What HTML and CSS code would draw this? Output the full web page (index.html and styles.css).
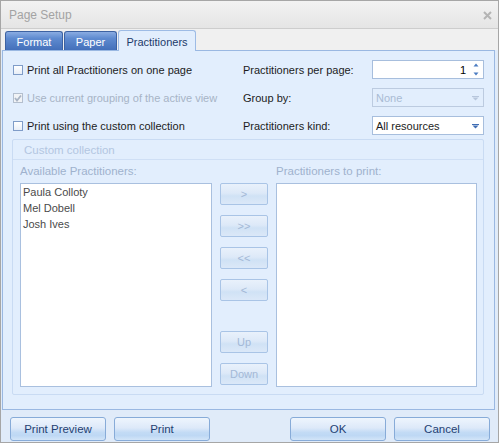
FILE: index.html
```html
<!DOCTYPE html>
<html>
<head>
<meta charset="utf-8">
<title>Page Setup</title>
<link rel="stylesheet" href="styles.css">
</head>
<body>
<div class="window">
  <div class="titlebar">
    <span class="title">Page Setup</span>
    <svg class="close" width="9" height="9" viewBox="0 0 9 9"><path d="M1 1L8 8M8 1L1 8" stroke="#b4b4b4" stroke-width="2"/></svg>
  </div>
  <div class="tabstrip">
    <div class="tab t-format">Format</div>
    <div class="tab t-paper">Paper</div>
    <div class="tab active t-pract">Practitioners</div>
  </div>
  <div class="body">
    <div class="panel">
      <div class="options">
        <div class="checks">
          <label class="check"><span class="box"></span><span>Print all Practitioners on one page</span></label>
          <label class="check disabled"><span class="box checked"><svg width="8" height="8" viewBox="0 0 8 8"><path d="M1 4L3 6.5L7 1.5" fill="none" stroke="#a9b4c4" stroke-width="1.8"/></svg></span><span>Use current grouping of the active view</span></label>
          <label class="check"><span class="box"></span><span>Print using the custom collection</span></label>
        </div>
        <div class="fields">
          <span class="flabel">Practitioners per page:</span>
          <div class="input spin"><span class="val">1</span>
            <svg class="spinarrows" width="6" height="13" viewBox="0 0 6 13"><path d="M0.5 3.5L3 0.5L5.5 3.5Z" fill="#4b7cc2"/><path d="M0.5 9.5L3 12.5L5.5 9.5Z" fill="#4b7cc2"/></svg>
          </div>
          <span class="flabel">Group by:</span>
          <div class="input combo disabled"><span class="val">None</span>
            <svg class="arrow" width="7" height="5" viewBox="0 0 7 5"><rect x="0" y="0" width="7" height="1" fill="#b7c6dc"/><path d="M0.5 1.5L6.5 1.5L3.5 4.5Z" fill="#b7c6dc"/></svg>
          </div>
          <span class="flabel">Practitioners kind:</span>
          <div class="input combo"><span class="val">All resources</span>
            <svg class="arrow" width="7" height="5" viewBox="0 0 7 5"><rect x="0" y="0" width="7" height="1" fill="#3f6db4"/><path d="M0.5 1.5L6.5 1.5L3.5 4.5Z" fill="#3f6db4"/></svg>
          </div>
        </div>
      </div>
      <div class="group">
        <div class="group-head">Custom collection</div>
        <div class="group-body">
          <div class="col col-left">
            <div class="cap">Available Practitioners:</div>
            <div class="list">
              <div class="item">Paula Colloty</div>
              <div class="item">Mel Dobell</div>
              <div class="item">Josh Ives</div>
            </div>
          </div>
          <div class="movebtns">
            <div class="mbtn">&gt;</div>
            <div class="mbtn">&gt;&gt;</div>
            <div class="mbtn">&lt;&lt;</div>
            <div class="mbtn">&lt;</div>
            <div class="mbtn up">Up</div>
            <div class="mbtn">Down</div>
          </div>
          <div class="col col-right">
            <div class="cap">Practitioners to print:</div>
            <div class="list"></div>
          </div>
        </div>
      </div>
    </div>
    <div class="footer">
      <div class="btn">Print Preview</div>
      <div class="btn">Print</div>
      <div class="spacer"></div>
      <div class="btn">OK</div>
      <div class="btn">Cancel</div>
    </div>
  </div>
</div>
</body>
</html>
```
FILE: styles.css
```css
* { box-sizing: border-box; }
body {
  margin: 0;
  background: #ffffff;
  font-family: "Liberation Sans", Arial, sans-serif;
  font-size: 11px;
  color: #1e1e1e;
}
.window {
  width: 499px;
  height: 443px;
  border: 1px solid #a6a6a6;
  display: flex;
  flex-direction: column;
  background: #f0f0f0;
}
.titlebar {
  height: 28px;
  flex: none;
  border-bottom: 1px solid #cdcdcd;
  background: linear-gradient(#f2f2f2, #e5e5e5);
  display: flex;
  align-items: center;
  justify-content: space-between;
  padding: 0 6px 0 8px;
}
.title {
  font-size: 12px;
  color: #a3a3a3;
  margin-top: 1px;
}
.close { display: block; margin-top: 1px; }
.tabstrip {
  height: 21px;
  flex: none;
  display: flex;
  align-items: flex-end;
  padding-left: 4px;
  gap: 1px;
  position: relative;
  z-index: 2;
}
.tab {
  height: 19px;
  margin-bottom: 0;
  border: 1px solid #3d62a2;
  border-bottom: none;
  border-radius: 3px 3px 0 0;
  background: linear-gradient(#8aace2, #5f8bd0 35%, #4470ba);
  color: #ffffff;
  display: flex;
  align-items: center;
  justify-content: center;
  padding-top: 1px;
}
.t-format { width: 58px; }
.t-paper { width: 53px; }
.t-pract { width: 78px; }
.tab.active {
  height: 21px;
  margin-bottom: -1px;
  border: 1px solid #9dbbe5;
  border-bottom: none;
  background: #e2eefd;
  color: #1d3a6a;
}
.body {
  flex: 1;
  display: flex;
  flex-direction: column;
  background: #e0ebf9;
}
.panel {
  height: 360px;
  flex: none;
  margin: 0 3px 0 1px;
  border: 1px solid #9ab8e2;
  background: #e2eefd;
  padding: 9px 10px 0 9px;
  display: flex;
  flex-direction: column;
}
.options {
  display: flex;
  justify-content: space-between;
}
.checks {
  display: flex;
  flex-direction: column;
  gap: 9px;
  margin-left: 1px;
}
.check {
  height: 19px;
  display: flex;
  align-items: center;
  gap: 4px;
  color: #1c1c1c;
}
.check.disabled { color: #a7b4c6; }
.box {
  width: 10px;
  height: 10px;
  border: 1px solid #7f9cc8;
  background: linear-gradient(#ffffff, #e8eef7);
  display: flex;
  align-items: center;
  justify-content: center;
}
.box.checked {
  border-color: #b4bfce;
  background: #f1f3f6;
}
.box svg { display: block; }
.fields {
  display: grid;
  grid-template-columns: 129px 112px;
  grid-auto-rows: 19px;
  row-gap: 9px;
  align-items: center;
}
.flabel { color: #1c1c1c; }
.input {
  height: 19px;
  border: 1px solid #a7bedd;
  background: #ffffff;
  display: flex;
  align-items: center;
}
.spin { justify-content: flex-end; padding-right: 4px; }
.spin .val { margin-right: 7px; color: #000; }
.spinarrows { display: block; }
.combo { justify-content: space-between; padding: 0 4px 0 3px; color: #1c1c1c; }
.combo .arrow { display: block; margin-top: 1px; }
.combo.disabled { border-color: #bccbe0; background: #e2eefd; color: #a9bbd4; }
.group {
  margin-top: 4px;
  height: 256px;
  border: 1px solid #c9dbf3;
  border-radius: 2px;
  display: flex;
  flex-direction: column;
}
.group-head {
  height: 20px;
  border-bottom: 1px solid #cfdff5;
  padding-left: 11px;
  display: flex;
  align-items: center;
  color: #b3c6e1;
  font-size: 11.5px;
}
.group-body {
  flex: 1;
  display: flex;
  gap: 8px;
  padding: 5px 6px 7px 7px;
}
.col {
  display: flex;
  flex-direction: column;
}
.col-left { width: 192px; }
.col-right { width: 201px; }
.cap {
  height: 13px;
  line-height: 13px;
  margin-bottom: 5px;
  color: #9fb2cd;
  font-size: 11.5px;
}
.list {
  flex: 1;
  border: 1px solid #a9c0df;
  background: #ffffff;
  padding: 0 2px;
}
.item {
  height: 16px;
  line-height: 16px;
  color: #4a4a4a;
}
.movebtns {
  width: 48px;
  padding-top: 18px;
  padding-bottom: 2px;
  display: flex;
  flex-direction: column;
  gap: 10px;
}
.mbtn {
  height: 22px;
  border: 1px solid #a9c4e6;
  border-radius: 2px;
  background: linear-gradient(#e9f1fb, #dde9f8 45%, #d0e2f5 60%, #dbe8f8);
  color: #a3b8d6;
  display: flex;
  align-items: center;
  justify-content: center;
}
.mbtn.up { margin-top: auto; }
.footer {
  flex: 1;
  display: flex;
  gap: 8px;
  padding: 7px 8px 0 9px;
}
.spacer { flex: 1; }
.btn {
  width: 96px;
  height: 24px;
  border: 1px solid #87abd8;
  border-radius: 3px;
  background: linear-gradient(#eef5fd, #dde9f9 45%, #c3dbf5 65%, #bed8f4 80%, #d3e5f8);
  color: #1f3f73;
  display: flex;
  align-items: center;
  justify-content: center;
  font-size: 11.5px;
}
```
